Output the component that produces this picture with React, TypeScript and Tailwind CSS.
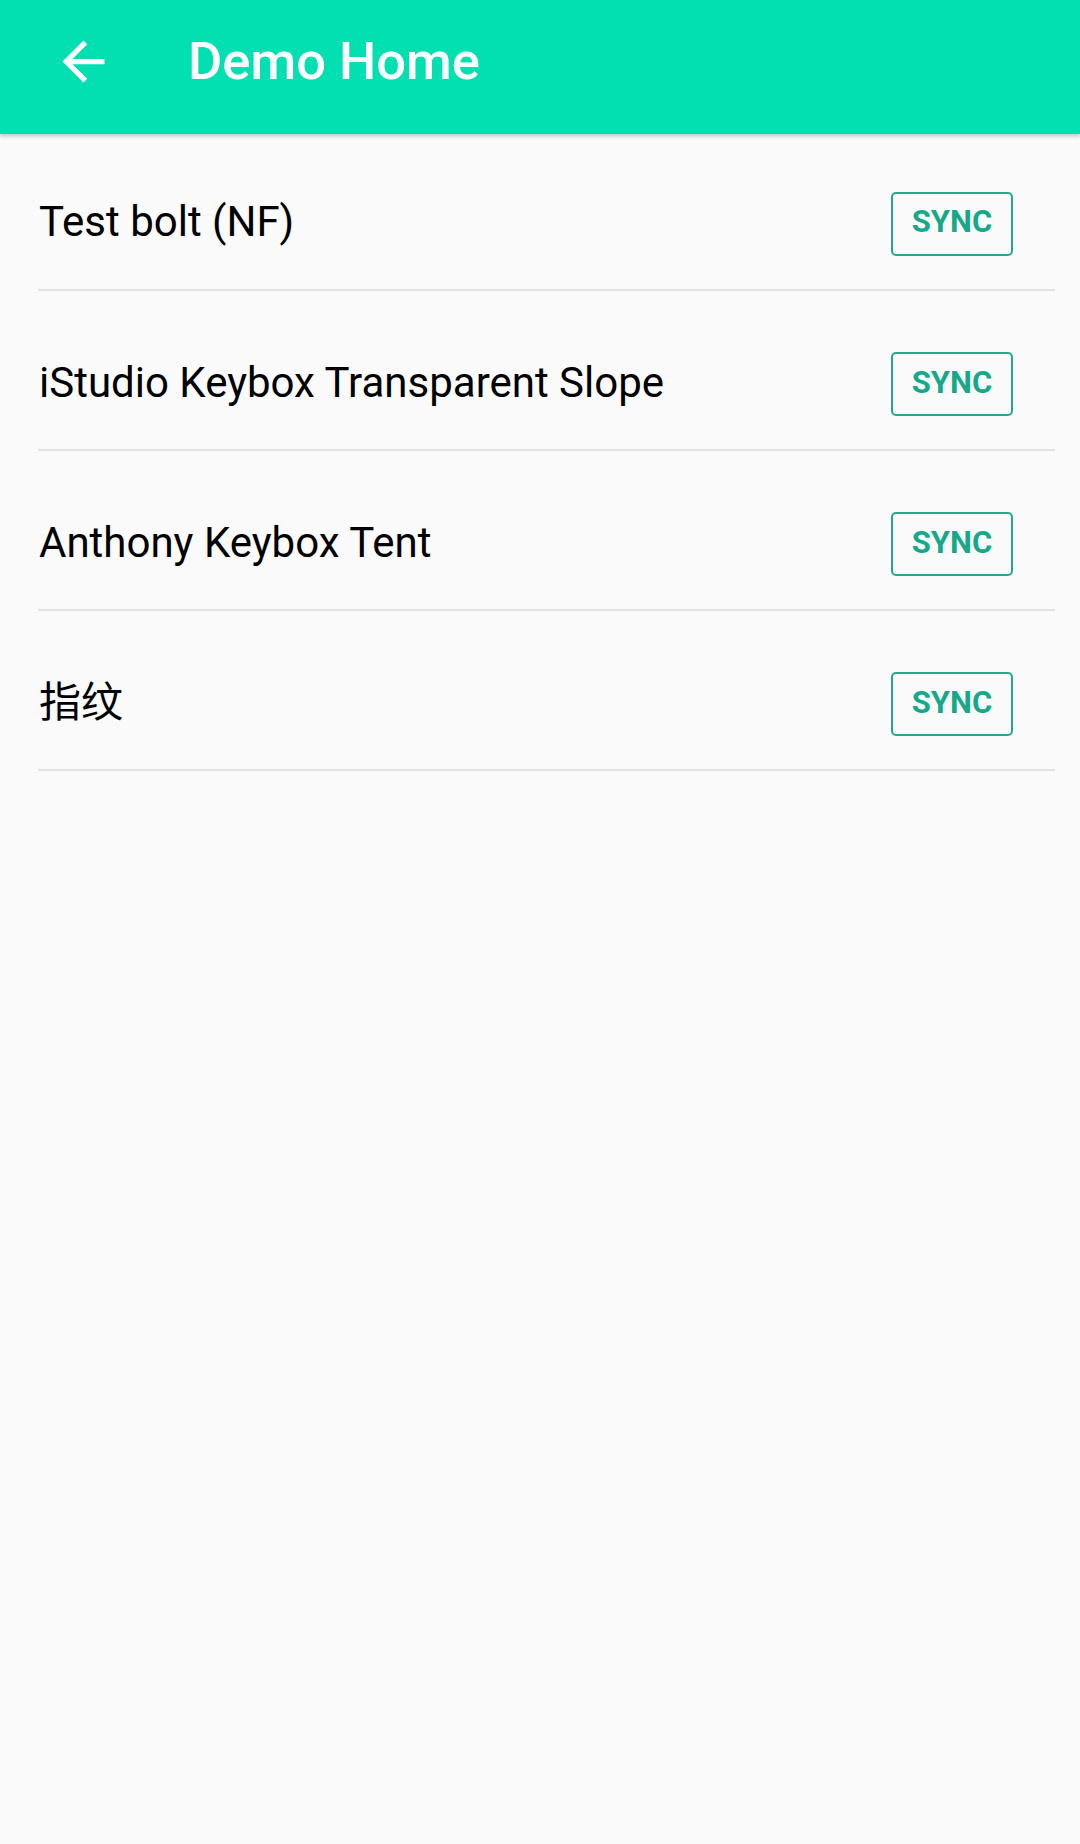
import React from "react";

const items = ["Test bolt (NF)", "iStudio Keybox Transparent Slope", "Anthony Keybox Tent", "指纹"];

export default function App() {
  return (
    <div className="w-[1080px] h-[1844px] bg-[#fafafa] font-['Roboto','Noto_Sans_CJK_SC',sans-serif] overflow-hidden">
      <div className="h-[134px] bg-[#02dfb1] shadow-[0_2px_4px_rgba(0,0,0,0.22)] relative z-10">
        <div className="h-[122px] flex items-center">
          <svg className="ml-[52px] w-[63px] h-[63px]" viewBox="0 0 24 24" fill="#ffffff">
            <path d="M20 11H7.83l5.59-5.59L12 4l-8 8 8 8 1.41-1.41L7.83 13H20v-2z" />
          </svg>
          <div className="ml-[73px] text-white text-[52.5px] font-medium leading-none">Demo Home</div>
        </div>
      </div>
      <div>
        {items.map((t, i) => (
          <div
            key={i}
            className={
              "ml-[38px] w-[1017px] border-b-2 border-[#e2e2e2] flex items-center justify-between pr-[42px] " +
              (i === 0 ? "h-[157px] pt-[24px]" : "h-[160px] pt-[28px]")
            }
          >
            <div className="pl-[1px] text-[42px] text-black mb-[4px] leading-[49px] whitespace-nowrap">{t}</div>
            <div className="w-[122px] h-[64px] border-2 border-[#22a98b] rounded-[5px] flex items-center justify-center text-[#15a889] font-bold text-[31px] leading-[36px] pb-[3px]">
              SYNC
            </div>
          </div>
        ))}
      </div>
    </div>
  );
}
